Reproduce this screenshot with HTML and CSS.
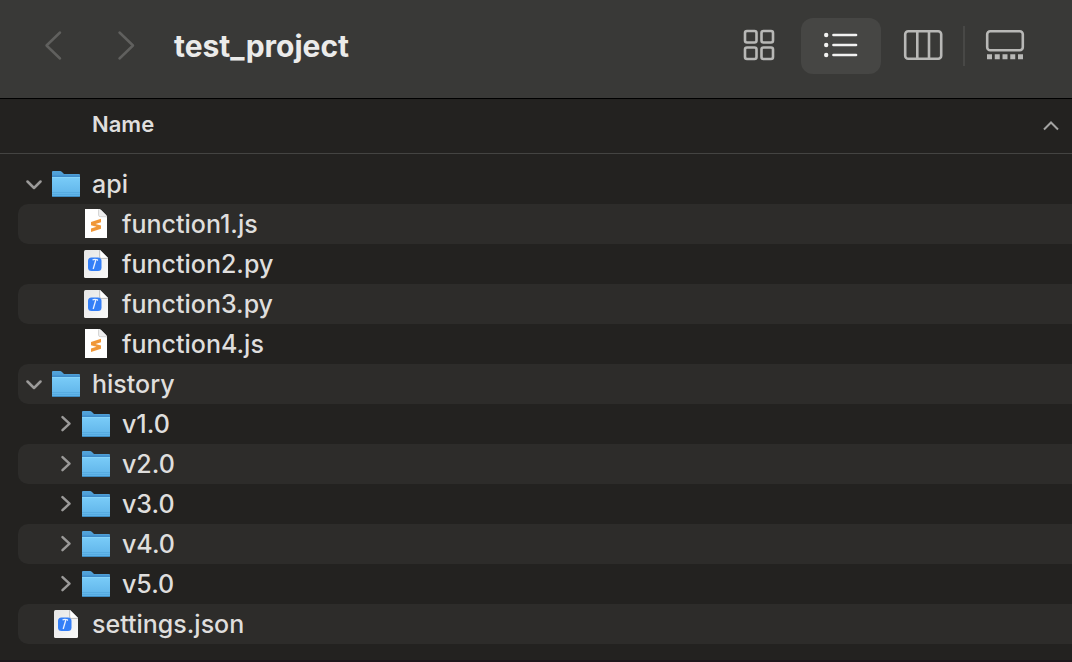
FILE: index.html
```html
<!DOCTYPE html>
<html lang="en">
<head>
<meta charset="utf-8">
<meta name="viewport" content="width=device-width, initial-scale=1">
<title>test_project</title>
<link rel="stylesheet" href="styles.css">
</head>
<body>
<svg class="sprite" aria-hidden="true">
  <defs>
    <linearGradient id="folder-back" x1="0" y1="0" x2="0" y2="1">
      <stop offset="0" stop-color="#53a5dc"/><stop offset="1" stop-color="#3276ad"/>
    </linearGradient>
    <linearGradient id="folder-front" x1="0" y1="0" x2="0" y2="1">
      <stop offset="0" stop-color="#7accf8"/><stop offset="1" stop-color="#5db2e8"/>
    </linearGradient>
    <linearGradient id="page" x1="0" y1="0" x2="1" y2="1">
      <stop offset="0" stop-color="#e6e6e6"/><stop offset="1" stop-color="#fafafa"/>
    </linearGradient>
  </defs>
  <symbol id="folder" viewBox="0 0 32 40">
    <path d="M2 8Q2 7 3 7H10Q11 7 12 8L13.500 9.500Q14 10 15 10H29Q30 10 30 11V31H2Z" fill="url(#folder-back)"/>
    <path d="M2 11.500H30V13H2Z" fill="#3f8ccb"/>
    <path d="M2 13H30V31.500Q30 33 28.500 33H3.500Q2 33 2 31.500Z" fill="url(#folder-front)"/>
    <path d="M2 13.500H30" stroke="#86d5fa"/>
    <path d="M2 28.500H30M2 30.500H30" stroke="#4fa4da" stroke-width=".6"/>
    <path d="M2.500 32.500H29.500" stroke="#3c8ac2"/>
  </symbol>
  <symbol id="file-js" viewBox="0 0 32 40">
    <path d="M5 5H18.500Q20 5 21 6L26 11Q27 12 27 13.500V34H5Z" fill="#fff"/>
    <path d="M18.500 5V11Q18.500 13 20.500 13H27Q27 12 26 11L21 6Q20 5 18.500 5Z" fill="#eee"/>
    <path d="M18.500 5.500V11Q18.500 12.700 20.500 12.700H26.500" fill="none" stroke="#c9c9c9" stroke-width=".7"/>
    <path d="M11 18L21 14.800V18.200L15.500 20L21 21.500V24.800L11 28V24.600L16.500 22.800L11 21.300Z" fill="#f0983a"/>
  </symbol>
  <symbol id="file-code" viewBox="0 0 32 40">
    <path d="M5.500 6H20L28 14V32.500Q28 34 26.500 34H5.500Q4 34 4 32.500V7.500Q4 6 5.500 6Z" fill="url(#page)"/>
    <path d="M20 6V13Q20 14 21 14H28Z" fill="#fff"/>
    <path d="M19.700 6V13Q19.700 14.400 21 14.400H28" fill="none" stroke="#a9a9a9" stroke-width=".7"/>
    <rect x="8" y="13.500" width="13.500" height="13.500" rx="3.500" fill="#347ff7"/>
    <path d="M12.500 16Q14.500 14.900 17.500 15.800V16.800" fill="none" stroke="#e9f1ff" stroke-width="1.100"/>
    <path d="M15.800 16L13.200 25" fill="none" stroke="#e9f1ff" stroke-width="1.300"/>
  </symbol>
  <symbol id="open" viewBox="0 0 16 40">
    <path d="M1.500 17.500L8 24L14.500 17.500" fill="none" stroke="#9b9a99" stroke-width="2.500" stroke-linecap="round" stroke-linejoin="round"/>
  </symbol>
  <symbol id="closed" viewBox="0 0 16 40">
    <path d="M6.500 13.200L13.500 19.700L6.500 26.200" fill="none" stroke="#9b9a99" stroke-width="2.500" stroke-linecap="round" stroke-linejoin="round"/>
  </symbol>
</svg>

<header class="toolbar">
  <nav class="history" aria-label="History">
    <button class="arrow" type="button" aria-label="Back"><svg width="20" height="32" viewBox="0 0 20 32"><path d="M16 2.500L2.500 15.500L16 28.500"/></svg></button>
    <button class="arrow" type="button" aria-label="Forward"><svg width="20" height="32" viewBox="0 0 20 32"><path d="M3.500 2.500L17 15.500L3.500 28.500"/></svg></button>
  </nav>
  <h1 class="title">test_project</h1>
  <div class="views">
    <button class="view" type="button" aria-label="Icons"><svg width="40" height="36" viewBox="0 0 40 36"><g class="line"><rect x="6" y="4" width="11.500" height="11.500" rx="2"/><rect x="22.500" y="4" width="11.500" height="11.500" rx="2"/><rect x="6" y="20.500" width="11.500" height="11.500" rx="2"/><rect x="22.500" y="20.500" width="11.500" height="11.500" rx="2"/></g></svg></button>
    <button class="view view-active" type="button" aria-label="List" aria-pressed="true"><svg width="40" height="36" viewBox="0 0 40 36"><g fill="#f2f2f1"><circle cx="5.200" cy="8" r="2.200"/><circle cx="5.200" cy="18" r="2.200"/><circle cx="5.200" cy="28" r="2.200"/></g><path d="M12.500 8H35M12.500 18H35M12.500 28H35" stroke="#f2f2f1" stroke-width="2.700" stroke-linecap="round"/></svg></button>
    <button class="view" type="button" aria-label="Columns"><svg width="40" height="36" viewBox="0 0 40 36"><g class="line"><rect x="2.200" y="4.200" width="36" height="27.600" rx="3"/><path d="M14.300 4V32M26 4V32"/></g></svg></button>
    <span class="divider"></span>
    <button class="view" type="button" aria-label="Gallery"><svg width="40" height="36" viewBox="0 0 40 36"><rect class="line" x="2.200" y="4.200" width="35.600" height="19" rx="3"/><path d="M2 29.800H38" fill="none" stroke="#b8b8b6" stroke-width="5" stroke-dasharray="5 2.750"/></svg></button>
  </div>
</header>

<main>
  <div class="columns">
    <button class="sort" type="button"><span>Name</span><svg width="16" height="16" viewBox="0 0 16 16"><path d="M1 13.500L8 6.500L15 13.500" fill="none" stroke="#a3a3a2" stroke-width="2"/></svg></button>
  </div>
  <ul class="tree">
    <li><div class="row"><button class="toggle" type="button" aria-label="Collapse api"><svg class="chevron"><use href="#open"/></svg></button><svg class="icon"><use href="#folder"/></svg><span>api</span></div>
      <ul>
        <li><div class="row child striped"><span class="toggle"></span><svg class="icon"><use href="#file-js"/></svg><span>function1.js</span></div></li>
        <li><div class="row child"><span class="toggle"></span><svg class="icon"><use href="#file-code"/></svg><span>function2.py</span></div></li>
        <li><div class="row child striped"><span class="toggle"></span><svg class="icon"><use href="#file-code"/></svg><span>function3.py</span></div></li>
        <li><div class="row child"><span class="toggle"></span><svg class="icon"><use href="#file-js"/></svg><span>function4.js</span></div></li>
      </ul>
    </li>
    <li><div class="row striped"><button class="toggle" type="button" aria-label="Collapse history"><svg class="chevron"><use href="#open"/></svg></button><svg class="icon"><use href="#folder"/></svg><span>history</span></div>
      <ul>
        <li><div class="row child"><button class="toggle" type="button" aria-label="Expand v1.0"><svg class="chevron"><use href="#closed"/></svg></button><svg class="icon"><use href="#folder"/></svg><span>v1.0</span></div></li>
        <li><div class="row child striped"><button class="toggle" type="button" aria-label="Expand v2.0"><svg class="chevron"><use href="#closed"/></svg></button><svg class="icon"><use href="#folder"/></svg><span>v2.0</span></div></li>
        <li><div class="row child"><button class="toggle" type="button" aria-label="Expand v3.0"><svg class="chevron"><use href="#closed"/></svg></button><svg class="icon"><use href="#folder"/></svg><span>v3.0</span></div></li>
        <li><div class="row child striped"><button class="toggle" type="button" aria-label="Expand v4.0"><svg class="chevron"><use href="#closed"/></svg></button><svg class="icon"><use href="#folder"/></svg><span>v4.0</span></div></li>
        <li><div class="row child"><button class="toggle" type="button" aria-label="Expand v5.0"><svg class="chevron"><use href="#closed"/></svg></button><svg class="icon"><use href="#folder"/></svg><span>v5.0</span></div></li>
      </ul>
    </li>
    <li><div class="row striped"><span class="toggle"></span><svg class="icon"><use href="#file-code"/></svg><span>settings.json</span></div></li>
  </ul>
</main>
</body>
</html>
```
FILE: styles.css
```css
* {
  box-sizing: border-box;
}

body {
  margin: 0;
  min-height: 100vh;
  display: flex;
  flex-direction: column;
  background: #232220;
  color: #dfdedd;
  font-family: Inter, "Liberation Sans", sans-serif;
  border-bottom: 2px solid #1e171b;
}

button {
  padding: 0;
  border: 0;
  background: none;
  color: inherit;
  font: inherit;
}

svg {
  display: block;
}

ul {
  margin: 0;
  padding: 0;
  list-style: none;
}

.sprite {
  position: absolute;
  width: 0;
  height: 0;
}

.toolbar {
  display: flex;
  align-items: center;
  padding: 18px 27px 24px 44px;
  background: #393937;
  border-bottom: 1px solid #000;
}

.history {
  display: flex;
  gap: 52px;
}

.arrow path {
  fill: none;
  stroke: #60605e;
  stroke-width: 2.5;
  stroke-linecap: round;
  stroke-linejoin: round;
}

.title {
  flex: 1;
  margin: 0 0 0 38px;
  color: #ebebea;
  font-size: 30px;
  line-height: 36px;
  font-weight: 700;
}

.views {
  display: flex;
  align-items: center;
}

.view {
  display: grid;
  place-items: center;
  width: 80px;
  height: 56px;
  padding-bottom: 2px;
  border-radius: 12px;
}

.view + .view {
  margin-left: 2px;
}

.view-active {
  background: #464644;
}

.divider {
  width: 2px;
  height: 40px;
  background: #484846;
}

.line {
  fill: none;
  stroke: #b8b8b6;
  stroke-width: 2.6;
}

.sort {
  display: flex;
  align-items: center;
  justify-content: space-between;
  width: 100%;
  height: 55px;
  padding: 0 13px 4px 92px;
  border-bottom: 1px solid #444442;
  font-size: 22px;
  font-weight: 600;
}

.tree {
  padding: 10px 0 16px 18px;
}

.row {
  display: flex;
  align-items: center;
  height: 40px;
  padding-left: 8px;
  border-radius: 10px 0 0 10px;
  font-size: 25px;
  font-weight: 500;
  line-height: 42px;
}

.child {
  padding-left: 38px;
}

.striped {
  background: #2d2c2a;
}

.toggle {
  width: 16px;
  margin-right: 8px;
}

.chevron {
  width: 16px;
  height: 40px;
}

.icon {
  width: 32px;
  height: 40px;
  margin-right: 10px;
}
```
